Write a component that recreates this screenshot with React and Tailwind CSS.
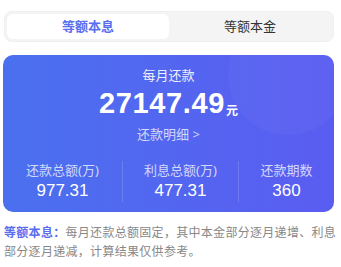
import React, { useState } from "react";

export default function App() {
  const [tab, setTab] = useState(0);
  const tabs = ["等额本息", "等额本金"];
  const stats = [
    { label: "还款总额(万)", value: "977.31" },
    { label: "利息总额(万)", value: "477.31" },
    { label: "还款期数", value: "360" },
  ];

  return (
    <div
      className="w-[341px] h-[267px] bg-white px-[3px] pt-[11px]"
      style={{ fontFamily: '"Noto Sans", "Noto Sans CJK SC", sans-serif' }}
    >
      <div className="flex h-[31px] rounded-lg bg-[#f4f4f4] border border-[#efefef] p-[2px] ml-[1px] mr-[4px]">
        {tabs.map((t, i) => (
          <button
            key={t}
            onClick={() => setTab(i)}
            className={
              i === tab
                ? "flex-1 rounded-md bg-white text-[13px] font-bold text-[#5a6ef0]"
                : "flex-1 rounded-md text-[13px] text-[#333]"
            }
          >
            {t}
          </button>
        ))}
      </div>

      <div className="relative overflow-hidden mt-[13px] mr-[4px] h-[157px] rounded-[10px] bg-gradient-to-r from-[#4a70ef] to-[#5a5cf1] text-white flex flex-col items-center">
        <div className="absolute left-[225px] top-[-40px] w-[120px] h-[120px] rounded-full bg-white/[0.03]" />
        <div className="mt-[10px] text-[13px] leading-[20px] opacity-90">每月还款</div>
        <div className="flex items-end leading-none mt-[4px]">
          <span
            className="text-[29px] font-bold tracking-[0.6px]"
            style={{ fontFamily: '"Liberation Sans", Arial, sans-serif' }}
          >
            27147.49
          </span>
          <span className="text-[12px] font-bold mb-[1px] ml-[1px]">元</span>
        </div>
        <div className="mt-[7px] text-[13px] leading-[18px] text-white/75">还款明细 &gt;</div>
        <div className="mt-[17px] grid grid-cols-[119px_116px_1fr] w-full">
          {stats.map((s, i) => (
            <div
              key={s.label}
              className={
                i > 0
                  ? "flex flex-col items-center border-l border-white/15 my-[1px]"
                  : "flex flex-col items-center my-[1px]"
              }
            >
              <div className="text-[13px] leading-[18px] text-white/75">{s.label}</div>
              <div
                className="text-[17px] leading-[22px] mt-[1px]"
                style={{ fontFamily: '"Liberation Sans", Arial, sans-serif' }}
              >
                {s.value}
              </div>
            </div>
          ))}
        </div>
      </div>

      <p className="mt-[11px] px-[1px] text-[12px] leading-[19px] text-[#888] tracking-[0.3px]">
        <span className="font-bold text-[#5a6ef0]">等额本息：</span>
        每月还款总额固定，其中本金部分逐月递增、利息部分逐月递减，计算结果仅供参考。
      </p>
    </div>
  );
}
